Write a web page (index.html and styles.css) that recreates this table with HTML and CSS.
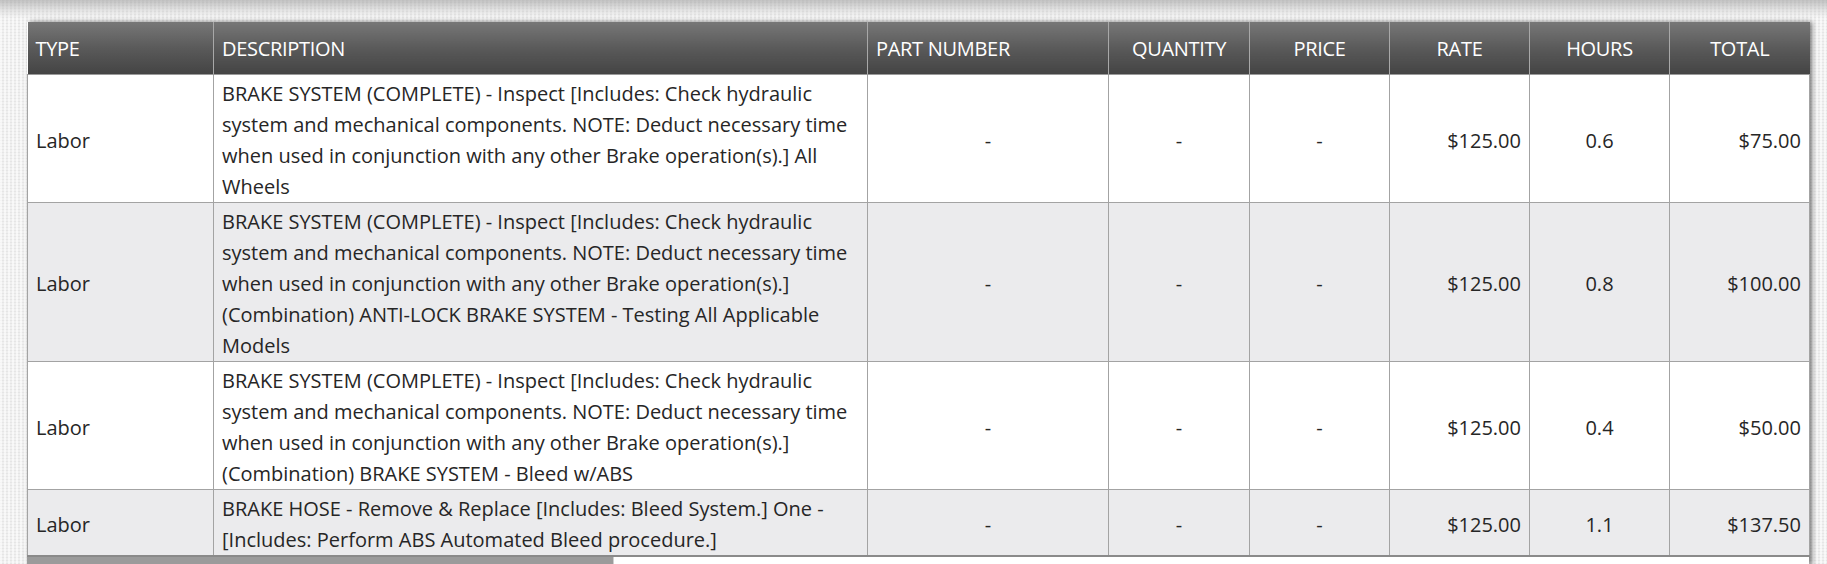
FILE: index.html
```html
<!DOCTYPE html>
<html lang="en">
<head>
<meta charset="utf-8">
<title>Estimate lines</title>
<link rel="stylesheet" href="styles.css">
</head>
<body>
<div class="page">
  <div class="table-wrap">
    <table class="lines">
      <colgroup>
        <col class="c-type"><col class="c-desc"><col class="c-part"><col class="c-qty"><col class="c-price"><col class="c-rate"><col class="c-hours"><col class="c-total">
      </colgroup>
      <thead>
        <tr>
          <th class="left">TYPE</th>
          <th class="left">DESCRIPTION</th>
          <th class="left">PART NUMBER</th>
          <th>QUANTITY</th>
          <th>PRICE</th>
          <th>RATE</th>
          <th>HOURS</th>
          <th>TOTAL</th>
        </tr>
      </thead>
      <tbody>
        <tr>
          <td>Labor</td>
          <td>BRAKE SYSTEM (COMPLETE) - Inspect [Includes: Check hydraulic system and mechanical components. NOTE: Deduct necessary time when used in conjunction with any other Brake operation(s).] All Wheels</td>
          <td class="center">-</td>
          <td class="center">-</td>
          <td class="center">-</td>
          <td class="right">$125.00</td>
          <td class="center">0.6</td>
          <td class="right">$75.00</td>
        </tr>
        <tr>
          <td>Labor</td>
          <td>BRAKE SYSTEM (COMPLETE) - Inspect [Includes: Check hydraulic system and mechanical components. NOTE: Deduct necessary time when used in conjunction with any other Brake operation(s).] (Combination) ANTI-LOCK BRAKE SYSTEM - Testing All Applicable Models</td>
          <td class="center">-</td>
          <td class="center">-</td>
          <td class="center">-</td>
          <td class="right">$125.00</td>
          <td class="center">0.8</td>
          <td class="right">$100.00</td>
        </tr>
        <tr>
          <td>Labor</td>
          <td>BRAKE SYSTEM (COMPLETE) - Inspect [Includes: Check hydraulic system and mechanical components. NOTE: Deduct necessary time when used in conjunction with any other Brake operation(s).] (Combination) BRAKE SYSTEM - Bleed w/ABS</td>
          <td class="center">-</td>
          <td class="center">-</td>
          <td class="center">-</td>
          <td class="right">$125.00</td>
          <td class="center">0.4</td>
          <td class="right">$50.00</td>
        </tr>
        <tr>
          <td>Labor</td>
          <td>BRAKE HOSE - Remove &amp; Replace [Includes: Bleed System.] One - [Includes: Perform ABS Automated Bleed procedure.]</td>
          <td class="center">-</td>
          <td class="center">-</td>
          <td class="center">-</td>
          <td class="right">$125.00</td>
          <td class="center">1.1</td>
          <td class="right">$137.50</td>
        </tr>
      </tbody>
    </table>
    <div class="scrollbar"><div class="thumb"></div></div>
  </div>
</div>
</body>
</html>
```

FILE: styles.css
```css
html, body {
  margin: 0;
  padding: 0;
}

body {
  height: 564px;
  overflow: hidden;
  font-family: "Open Sans", "Noto Sans", sans-serif;
  color: #262626;
  background-color: #efefef;
  background-image:
    linear-gradient(to bottom, rgba(150,150,150,0.55) 0px, rgba(190,190,190,0.35) 10px, rgba(239,239,239,0) 18px),
    repeating-linear-gradient(90deg, rgba(255,255,255,0.6) 0 2px, rgba(0,0,0,0) 2px 4px),
    repeating-linear-gradient(0deg, rgba(225,225,225,0.7) 0 1px, rgba(0,0,0,0) 1px 3px);
}

.page {
  padding: 22px 18px 0 27px;
}

.table-wrap {
  width: 1782px;
  background: #ffffff;
  box-shadow: 3px 0 5px rgba(0, 0, 0, 0.5);
}

.lines {
  width: 1782px;
  border-collapse: collapse;
  table-layout: fixed;
}

.c-type { width: 186px; }
.c-desc { width: 654px; }
.c-part { width: 241px; }
.c-qty { width: 141px; }
.c-price { width: 140px; }
.c-rate { width: 140px; }
.c-hours { width: 140px; }
.c-total { width: 140px; }

.lines th {
  height: 52px;
  padding: 0 8px;
  font-weight: 400;
  font-size: 20px;
  color: #ffffff;
  text-align: center;
  background: linear-gradient(to bottom, #777777 0%, #5a5a5a 50%, #444444 100%);
  border-left: 1px solid #a8a8a8;
  border-bottom: 1px solid #9a9a9a;
  letter-spacing: -0.3px;
}

.lines th:first-child {
  border-left: none;
}

.lines th.left {
  text-align: left;
}

.lines td {
  padding: 3px 8px 0;
  font-size: 20px;
  line-height: 31px;
  vertical-align: middle;
  border: 1px solid #a3a3a3;
  text-align: left;
}

.lines td.center { text-align: center; }
.lines td.right { text-align: right; }

.lines tbody tr:nth-child(even) td {
  background: #ebebed;
}

.lines tbody tr:last-child td {
  border-bottom: 2px solid #8a8a8a;
}

.scrollbar {
  display: flex;
  height: 8px;
  background: #ffffff;
}

.thumb {
  width: 586px;
  background: #9b9b9b;
  border-right: 1px solid #cfcfcf;
}
```
